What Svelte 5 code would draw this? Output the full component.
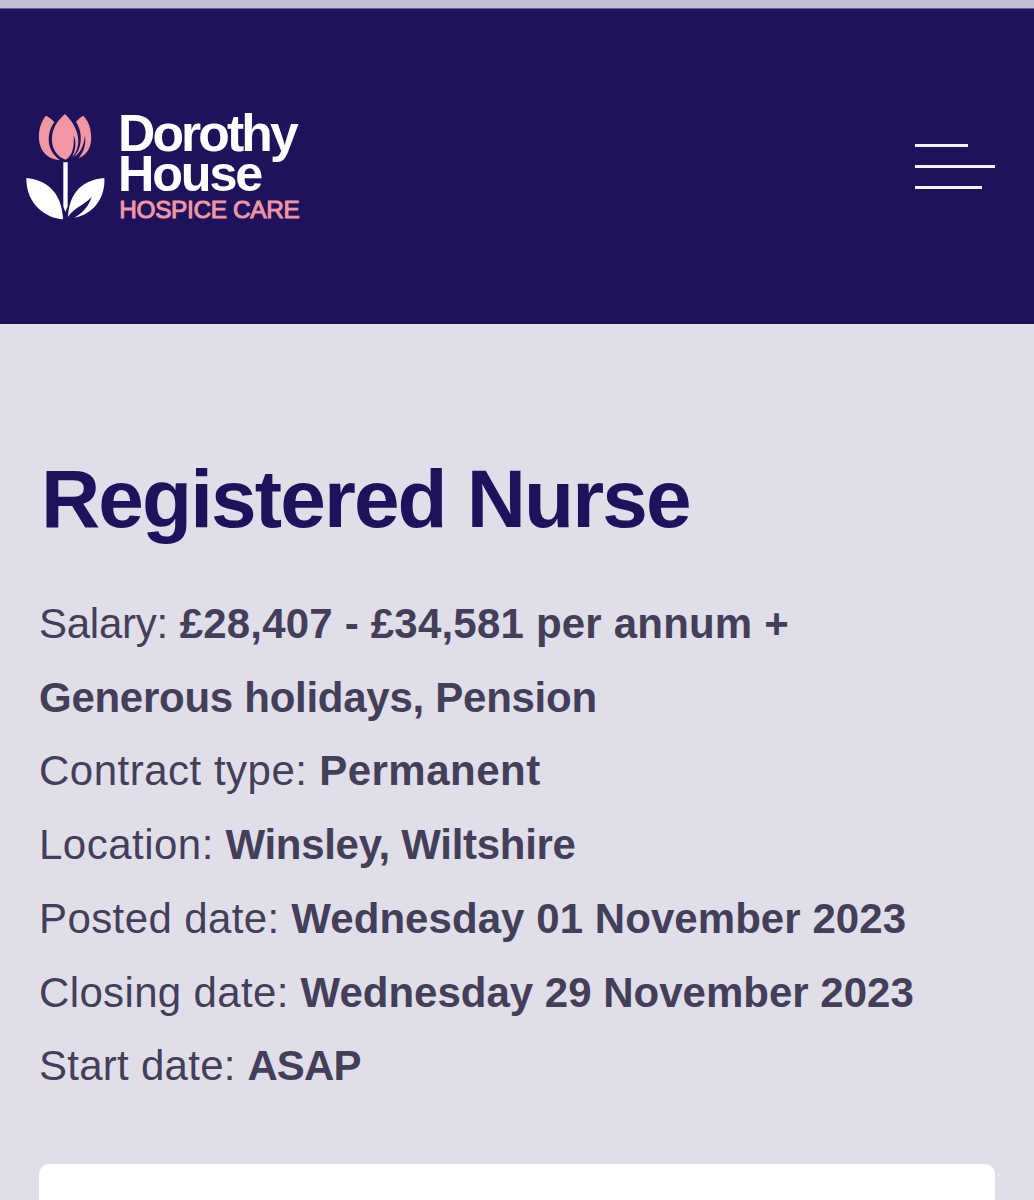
<script lang="ts">
    type Detail = { label: string; lines: string[]; key: string };

    const details: Detail[] = [
        { key: 'salary', label: 'Salary:', lines: ['£28,407 - £34,581 per annum +', 'Generous holidays, Pension'] },
        { key: 'contract', label: 'Contract type:', lines: ['Permanent'] },
        { key: 'location', label: 'Location:', lines: ['Winsley, Wiltshire'] },
        { key: 'posted', label: 'Posted date:', lines: ['Wednesday 01 November 2023'] },
        { key: 'closing', label: 'Closing date:', lines: ['Wednesday 29 November 2023'] },
        { key: 'start', label: 'Start date:', lines: ['ASAP'] }
    ];
</script>

<div class="page">
    <div class="browser-edge"></div>

    <header class="header">
        <a class="logo" href="#home" aria-label="Dorothy House Hospice Care">
            <svg viewBox="0 0 840 360" width="280" height="120">
                <g class="petals">
                    <path d="M78 32 C50 64 48 127 82 152 C94 161 107 165 120 165 C80 139 77 87 103 52 C96 43 87 36 78 32Z" />
                    <path d="M135 27 C105 52 94 80 96 109 C98 135 113 157 137 164 C155 154 164 131 161 91 C170 113 167 135 157 155 C184 128 184 75 135 27Z" />
                    <path d="M190 32 C181 37 174 43 168 51 C181 71 185 94 181 116 C178 134 170 147 160 156 C181 145 191 124 195 92 C199 120 190 143 175 160 C207 148 216 119 213 88 C211 64 204 47 190 32Z" />
                </g>
                <g class="leaves">
                    <path d="M130 172 H143 V304 L136 321 L130 304Z" />
                    <path d="M19 219 C75 224 125 257 129 343 C78 340 18 298 19 219Z" />
                    <path d="M253 219 C192 224 148 258 144 336 C162 308 190 302 215 276 C207 301 190 323 163 338 C217 329 257 281 253 219Z" />
                </g>
                <text class="name" x="294" y="138" font-size="155" textLength="542">Dorothy</text>
                <text class="name" x="294" y="258" font-size="151" textLength="436">House</text>
                <text class="strapline" x="298" y="339" font-size="73" textLength="541">HOSPICE CARE</text>
            </svg>
        </a>
        <button class="menu" aria-label="Menu">
            <span class="bar short"></span>
            <span class="bar"></span>
            <span class="bar medium"></span>
        </button>
    </header>

    <main class="content">
        <h1 class="title">Registered Nurse</h1>

        <div class="details">
            {#each details as detail}
                <div class="detail {detail.key}">
                    <span class="label">{detail.label}</span>
                    <div class="value">
                        {#each detail.lines as line}
                            <strong>{line}</strong>
                        {/each}
                    </div>
                </div>
            {/each}
        </div>

        <section class="card"></section>
    </main>
</div>

<style>
    :global(body) {
        margin: 0;
        background: #e0dee9;
    }

    .page {
        height: 1200px;
        overflow: hidden;
        background: #e0dee9;
        font-family: 'Liberation Sans', Arial, sans-serif;
        color: #443f59;
    }

    .browser-edge {
        box-sizing: border-box;
        height: 9px;
        background: #c1bdd2;
        border-bottom: 1px solid #6d6392;
    }

    .header {
        box-sizing: border-box;
        display: flex;
        justify-content: space-between;
        align-items: flex-start;
        height: 315px;
        padding: 96px 39px 0 20px;
        background: #1f125c;
    }

    .logo svg {
        display: block;
        overflow: visible;
    }

    .petals {
        fill: #f097a3;
    }

    .leaves {
        fill: #fff;
    }

    .name {
        fill: #fff;
        font-weight: bold;
    }

    .strapline {
        fill: #f097a3;
        stroke: #f097a3;
        stroke-width: 3px;
    }

    .menu {
        display: flex;
        flex-direction: column;
        gap: 18px;
        width: 80px;
        margin: 39px 0 0;
        padding: 0;
        border: 0;
        background: none;
    }

    .bar {
        width: 80px;
        height: 3px;
        background: #f6f3fc;
    }

    .bar.short {
        width: 53px;
    }

    .bar.medium {
        width: 67px;
    }

    .content {
        padding: 127px 39px 0;
    }

    .title {
        margin: 0 0 0 2px;
        font-size: 82px;
        line-height: 96px;
        letter-spacing: -1.9px;
        color: #1f125c;
    }

    .details {
        margin-top: 40px;
    }

    .detail {
        display: flex;
        flex-wrap: wrap;
        column-gap: 11.7px;
        font-size: 42px;
        line-height: 73.7px;
        white-space: nowrap;
    }

    .value {
        display: contents;
    }

    .salary .label {
        letter-spacing: -0.25px;
    }

    .salary strong:first-child {
        margin-right: 160px;
        letter-spacing: 0.2px;
    }

    .salary strong:last-child {
        letter-spacing: -0.27px;
    }

    .contract {
        letter-spacing: 0.5px;
    }

    .location .label {
        letter-spacing: 0.48px;
    }

    .location strong {
        letter-spacing: -0.3px;
    }

    .posted .label {
        letter-spacing: 0.4px;
    }

    .posted strong {
        letter-spacing: 0.06px;
    }

    .closing .label {
        letter-spacing: 0.36px;
    }

    .start .label {
        letter-spacing: 0.27px;
    }

    .start strong {
        letter-spacing: -0.9px;
    }

    .card {
        height: 80px;
        margin-top: 61px;
        border-radius: 10px;
        background: #fff;
    }
</style>
